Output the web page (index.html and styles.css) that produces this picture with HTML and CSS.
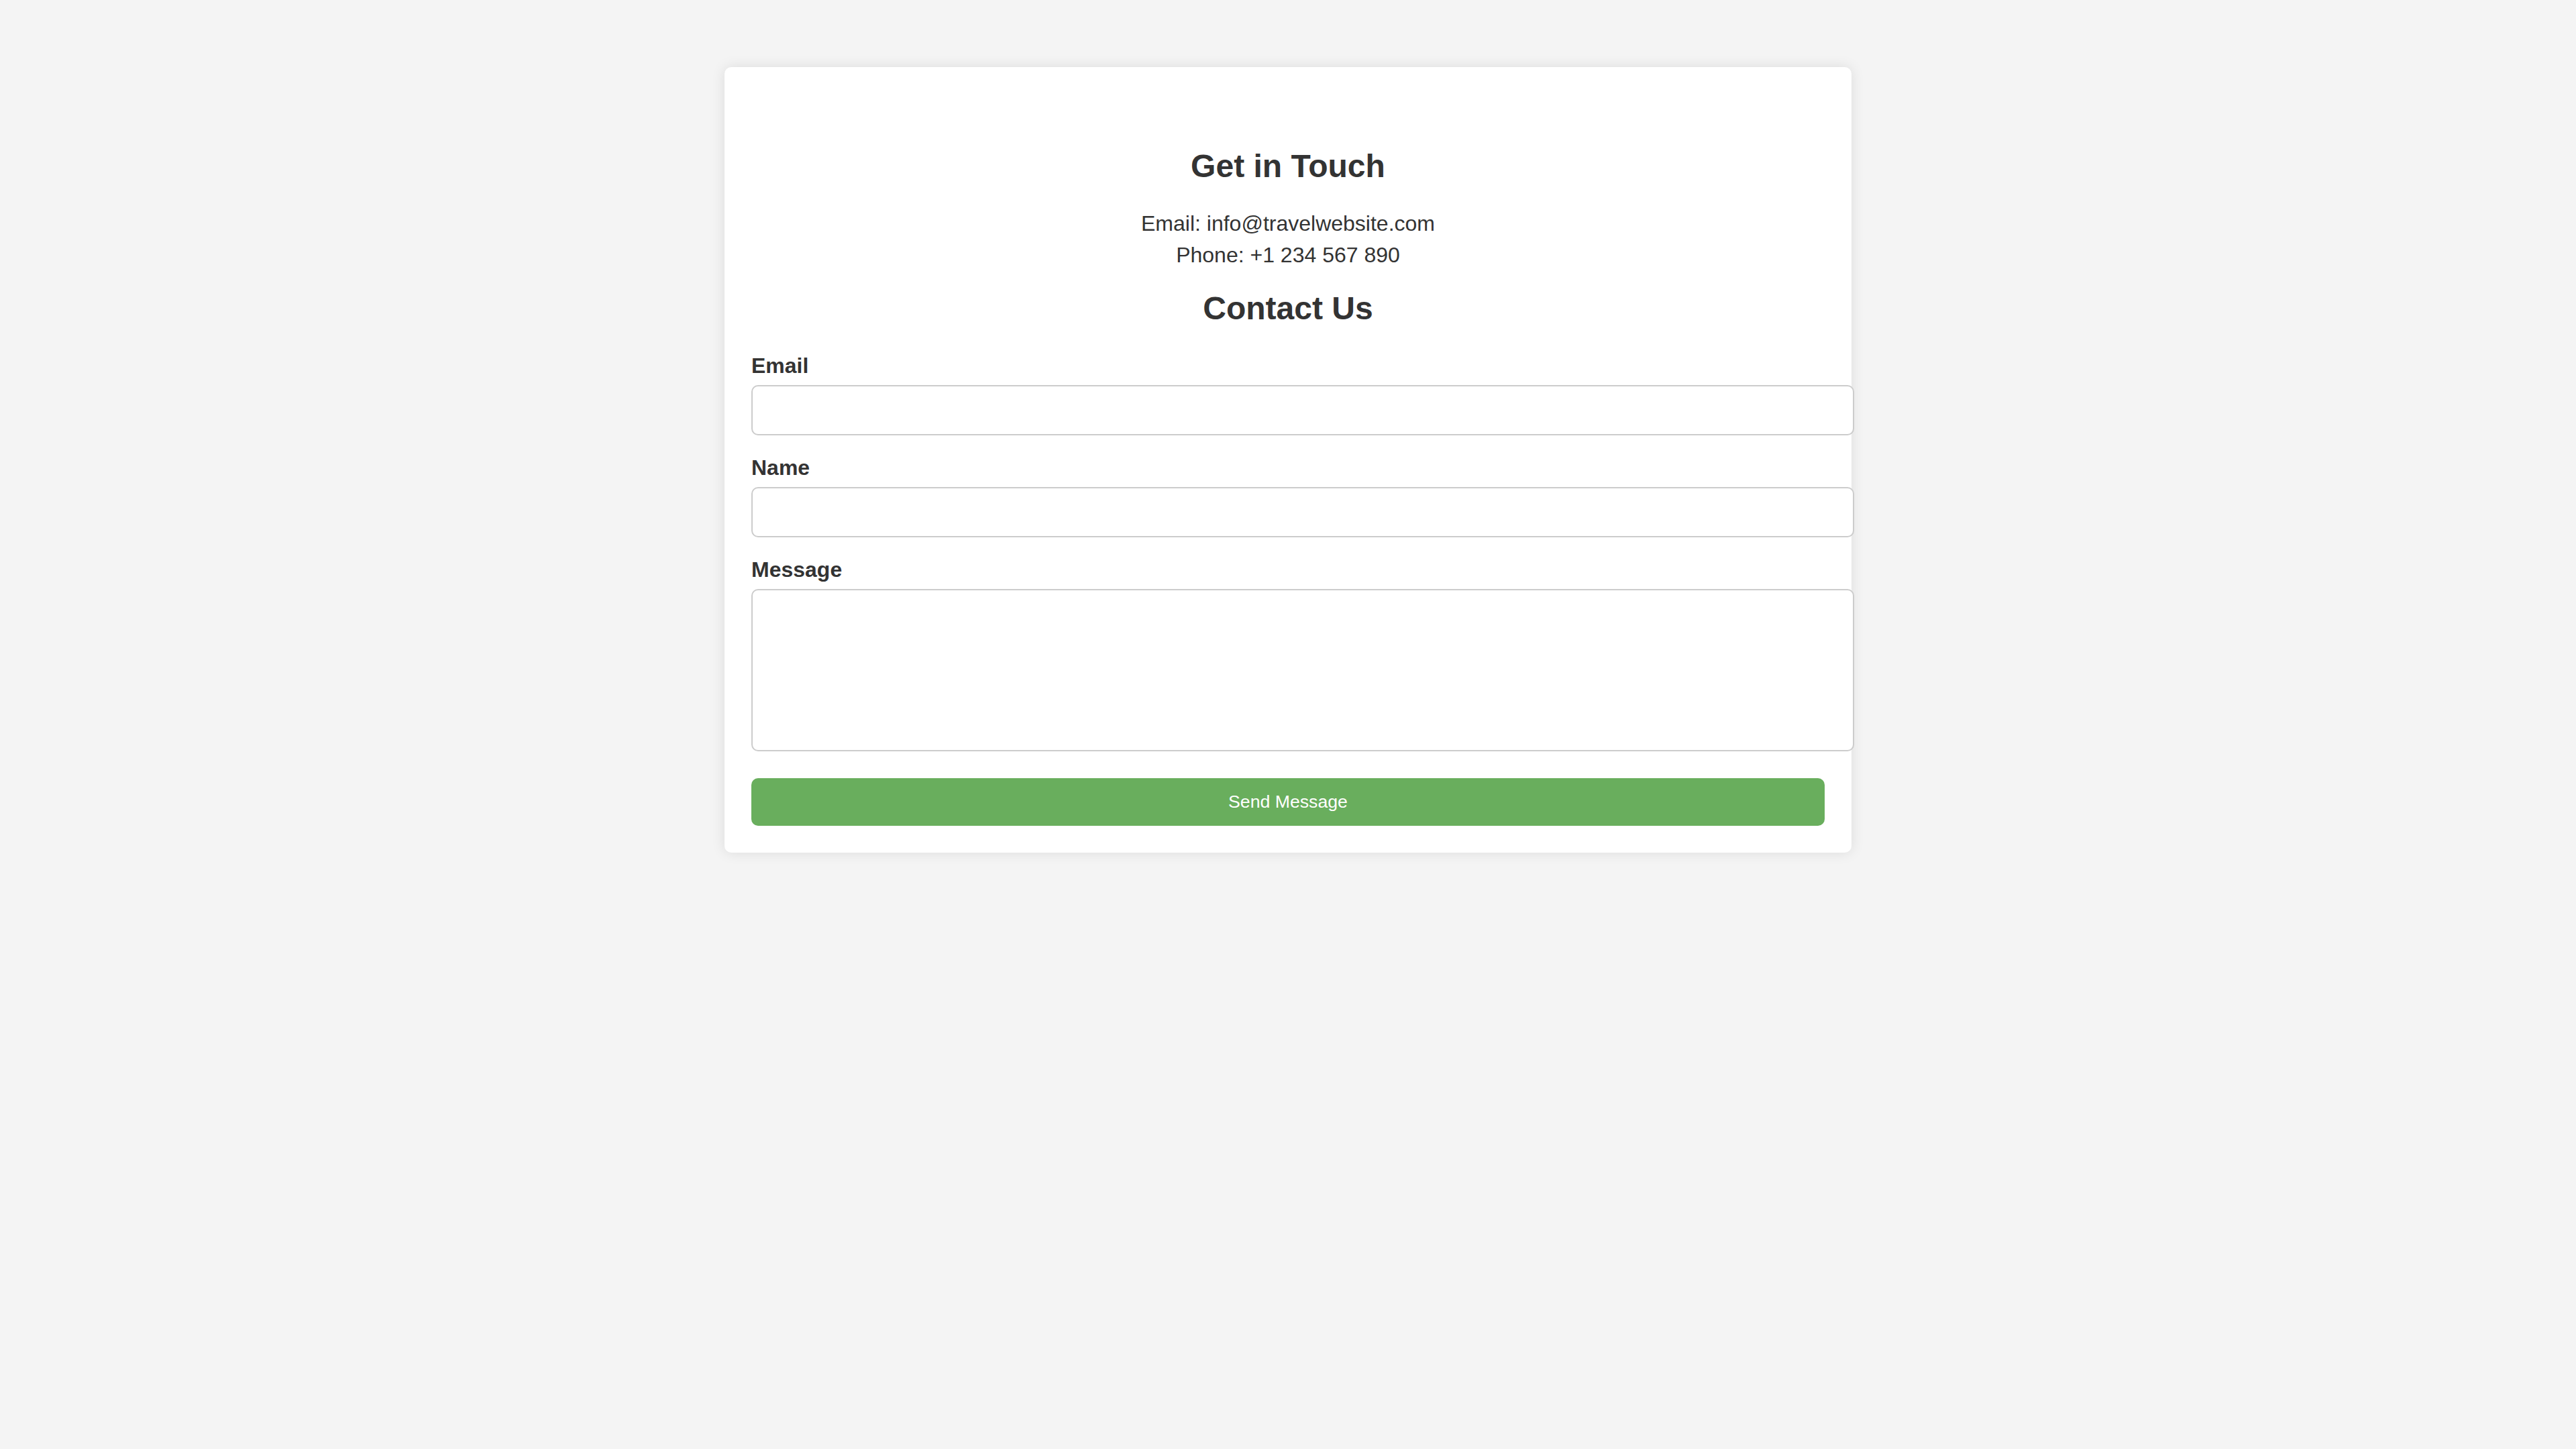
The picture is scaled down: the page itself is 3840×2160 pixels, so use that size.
FILE: index.html
```html
<!DOCTYPE html>
<html lang="en">
<head>
<meta charset="utf-8">
<title>Contact Us</title>
<link rel="stylesheet" href="styles.css">
</head>
<body>
<div class="container">
  <section class="contact-info">
    <h2 class="title">Get in Touch</h2>
    <p class="info">Email: info@travelwebsite.com</p>
    <p class="info">Phone: +1 234 567 890</p>
  </section>
  <form class="contact-form">
    <h2 class="title form-title">Contact Us</h2>
    <div class="form-group">
      <label class="label" for="email">Email</label>
      <input class="field" type="email" id="email">
    </div>
    <div class="form-group">
      <label class="label" for="name">Name</label>
      <input class="field" type="text" id="name">
    </div>
    <div class="form-group form-group-last">
      <label class="label" for="message">Message</label>
      <textarea class="field textarea" id="message"></textarea>
    </div>
    <button class="submit" type="button">Send Message</button>
  </form>
</div>
</body>
</html>
```
FILE: styles.css
```css
html, body {
  margin: 0;
  padding: 0;
}
body {
  background: #f4f4f4;
  font-family: "Liberation Sans", Arial, Helvetica, sans-serif;
  font-size: 32px;
  color: #333;
}
.container {
  width: 1600px;
  margin: 100px auto;
  padding: 40px;
  background: #fff;
  border-radius: 10px;
  box-shadow: 0 0 20px rgba(0, 0, 0, 0.1);
}
.contact-info {
  padding-top: 40px;
  text-align: center;
}
.title {
  font-size: 48px;
  font-weight: bold;
  text-align: center;
  margin: 39.84px 0;
  color: #333;
}
.info {
  margin: 10px 0;
  color: #333;
}
.form-title {
  margin: 33px 0 40px;
}
.form-group {
  margin-bottom: 30px;
}
.form-group-last {
  margin-bottom: 40px;
}
.label {
  display: block;
  font-weight: bold;
  margin-bottom: 10px;
}
.field {
  display: block;
  width: 100%;
  padding: 20px;
  border: 2px solid #ccc;
  border-radius: 10px;
  font-family: "Liberation Sans", Arial, sans-serif;
  font-size: 26.67px;
  background: #fff;
  margin: 0;
}
.textarea {
  height: 198px;
  resize: none;
}
.submit {
  display: block;
  width: 100%;
  padding: 20px;
  border: none;
  border-radius: 10px;
  background: #69ae5d;
  color: #fff;
  font-family: "Liberation Sans", Arial, sans-serif;
  font-size: 26.67px;
  cursor: pointer;
}
```
